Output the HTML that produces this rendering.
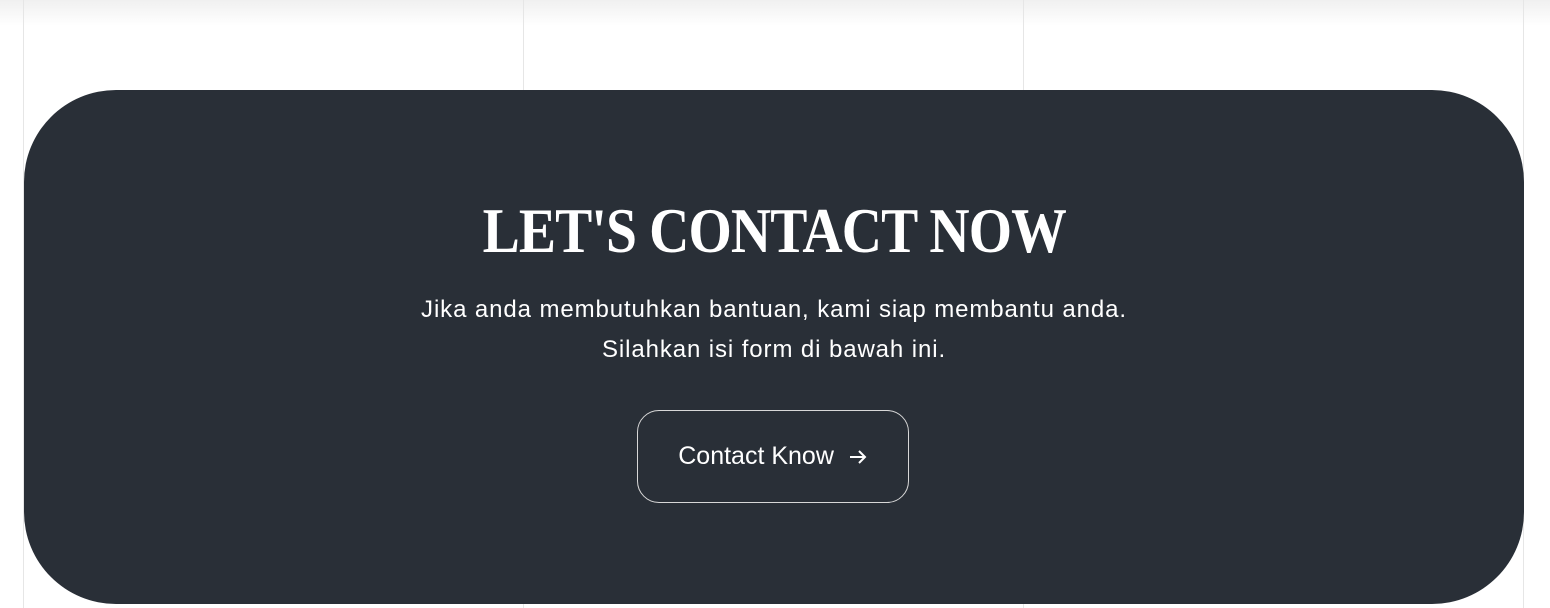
<!DOCTYPE html>
<html><head><style>
html,body{margin:0;padding:0;width:1550px;height:608px;overflow:hidden;background:#fff;font-family:"Liberation Sans",sans-serif}
.sh{position:absolute;left:0;top:0;width:1550px;height:26px;background:linear-gradient(#f0f0f0,#fff)}
.vl{position:absolute;top:0;width:1px;height:608px;background:#e6e6e6}
.panel{position:absolute;left:24px;top:90px;width:1500px;height:514px;background:#292f37;border-radius:92px}
.title{position:absolute;left:0;width:1500px;top:106px;text-align:center;color:#fff}
.title span{display:inline-block;font-family:"Liberation Serif",serif;font-weight:bold;font-size:64px;line-height:70px;transform:scaleX(0.87);letter-spacing:-1px}
.sub{position:absolute;left:0;width:1500px;top:200px;text-align:center;color:#fff;font-size:24px;line-height:40px;letter-spacing:0.9px}
.btn{position:absolute;left:613px;top:320px;width:272px;height:93px;border:1px solid #d8d8d8;border-radius:22px;box-sizing:border-box;color:#fff;font-size:25px;display:flex;align-items:center;justify-content:center}
</style></head><body>
<div class="sh"></div>
<div class="vl" style="left:23px"></div><div class="vl" style="left:523px"></div><div class="vl" style="left:1023px"></div><div class="vl" style="left:1523px"></div>
<div class="panel">
<div class="title"><span>LET'S CONTACT NOW</span></div>
<div class="sub">Jika anda membutuhkan bantuan, kami siap membantu anda.<br>Silahkan isi form di bawah ini.</div>
<div class="btn">Contact Know&nbsp;&nbsp;<svg width="20" height="20" viewBox="0 0 20 20"><path d="M2 10H17M11 4l6 6-6 6" stroke="#fff" stroke-width="2" fill="none"/></svg></div>
</div>
</body></html>
